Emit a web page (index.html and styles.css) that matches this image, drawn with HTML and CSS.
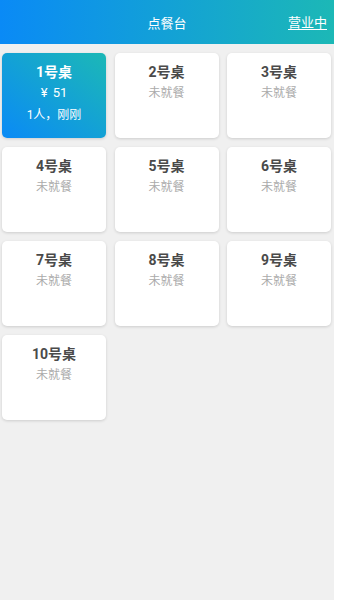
FILE: index.html
```html
<!DOCTYPE html>
<html lang="zh-CN">
<head>
<meta charset="utf-8">
<link rel="stylesheet" href="styles.css">
</head>
<body>
<div class="app">
  <header class="topbar">
    <span class="title">点餐台</span>
    <a class="status">营业中</a>
  </header>
  <main class="grid">
    <div class="card active">
      <div class="name">1号桌</div>
      <div class="price">¥ 51</div>
      <div class="line">1人，刚刚</div>
    </div>
    <div class="card"><div class="name">2号桌</div><div class="sub">未就餐</div></div>
    <div class="card"><div class="name">3号桌</div><div class="sub">未就餐</div></div>
    <div class="card"><div class="name">4号桌</div><div class="sub">未就餐</div></div>
    <div class="card"><div class="name">5号桌</div><div class="sub">未就餐</div></div>
    <div class="card"><div class="name">6号桌</div><div class="sub">未就餐</div></div>
    <div class="card"><div class="name">7号桌</div><div class="sub">未就餐</div></div>
    <div class="card"><div class="name">8号桌</div><div class="sub">未就餐</div></div>
    <div class="card"><div class="name">9号桌</div><div class="sub">未就餐</div></div>
    <div class="card"><div class="name">10号桌</div><div class="sub">未就餐</div></div>
  </main>
</div>
</body>
</html>
```
FILE: styles.css
```css
html, body {
  margin: 0;
  padding: 0;
  background: #ffffff;
  font-family: Roboto, "Noto Sans CJK SC", sans-serif;
}
.app {
  width: 334px;
  min-height: 600px;
  background: #f0f0f0;
}
.topbar {
  height: 44px;
  display: flex;
  align-items: center;
  justify-content: center;
  position: relative;
  background: linear-gradient(to right, #0a8af6, #1cb8b6);
  color: #fff;
}
.title {
  font-size: 13px;
}
.status {
  position: absolute;
  right: 7px;
  top: 14px;
  font-size: 13px;
  line-height: 18px;
  color: #fff;
  text-decoration: underline;
  text-underline-offset: 2px;
}
.grid {
  display: grid;
  grid-template-columns: repeat(3, 104px);
  column-gap: 8.5px;
  row-gap: 9px;
  padding: 9px 0 0 2px;
}
.card {
  height: 85px;
  background: #fff;
  border-radius: 5px;
  box-shadow: 0 1px 3px rgba(0, 0, 0, 0.15);
  display: flex;
  flex-direction: column;
  align-items: center;
  padding-top: 9px;
  box-sizing: border-box;
}
.name {
  font-size: 14px;
  font-weight: bold;
  color: #4a4a4a;
  line-height: 20px;
}
.sub {
  font-size: 12px;
  color: #aaa;
  line-height: 22px;
}
.card.active {
  background: linear-gradient(to top right, #0a8af6, #1cb8b6);
}
.active .name, .active .price, .active .line {
  color: #fff;
}
.price {
  font-size: 13px;
  line-height: 22px;
  word-spacing: 2px;
}
.line {
  font-size: 12px;
  line-height: 22px;
}
```
